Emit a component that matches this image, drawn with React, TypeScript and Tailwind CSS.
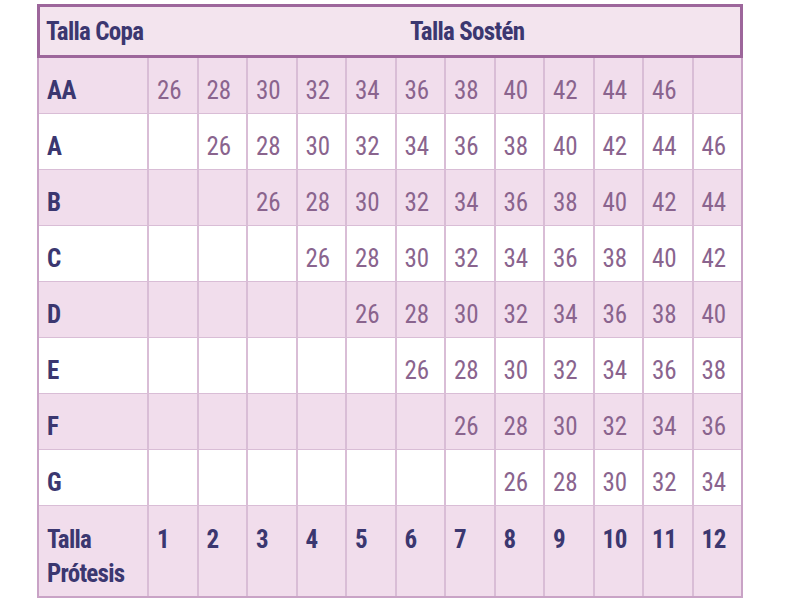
import React from "react";

const rows: { cup: string; start: number }[] = [
  { cup: "AA", start: 0 },
  { cup: "A", start: 1 },
  { cup: "B", start: 2 },
  { cup: "C", start: 3 },
  { cup: "D", start: 4 },
  { cup: "E", start: 5 },
  { cup: "F", start: 6 },
  { cup: "G", start: 7 },
];

const sizes = [26, 28, 30, 32, 34, 36, 38, 40, 42, 44, 46];

function cellValue(start: number, col: number) {
  const i = col - start;
  if (i < 0 || i >= sizes.length) return "";
  return String(sizes[i]);
}

export default function App() {
  const font = { fontFamily: "'Liberation Sans Narrow', 'Roboto Condensed', 'DejaVu Sans Condensed', Roboto, sans-serif" };
  return (
    <div className="w-[790px] h-[600px] bg-white pt-[4px] pl-[37px]" style={font}>
      <div className="w-[706px]">
        {/* header */}
        <div className="h-[54px] border-[3px] border-[#9d669b] bg-[#f3e4ee] flex items-center pt-[2px] text-[25px] font-bold tracking-[-0.7px] text-[#3b3770] whitespace-nowrap">
          <div className="w-[107px] pl-[6px]">Talla Copa</div>
          <div className="flex-1 pl-[263px]">Talla Sostén</div>
        </div>
        {/* body */}
        <div className="border-x-2 border-b-2 border-[#c9a3c6]">
          {rows.map((r, ri) => (
            <div
              key={r.cup}
              className={`grid grid-cols-[108px_repeat(12,minmax(0,1fr))] h-[56px] border-b border-[#d9bdd6] ${
                ri % 2 === 0 ? "bg-[#f1ddec]" : "bg-white"
              }`}
            >
              <div className="flex items-center pl-[8px] pt-[10px] text-[25px] font-bold tracking-[-0.5px] text-[#3b3770]">{r.cup}</div>
              {Array.from({ length: 12 }).map((_, c) => (
                <div
                  key={c}
                  className="flex items-center pl-[8px] pt-[10px] border-l-2 border-[#d9bdd6] text-[25px] text-[#8a648e]"
                >
                  {cellValue(r.start, c)}
                </div>
              ))}
            </div>
          ))}
          <div className="grid grid-cols-[108px_repeat(12,minmax(0,1fr))] h-[90px] bg-[#f1ddec]">
            <div className="pl-[8px] pt-[17px] text-[25px] leading-[34px] font-bold tracking-[-0.7px] text-[#3b3770]">
              Talla
              <br />
              Prótesis
            </div>
            {Array.from({ length: 12 }).map((_, c) => (
              <div
                key={c}
                className="pl-[8px] pt-[17px] leading-[34px] border-l-2 border-[#d9bdd6] text-[25px] font-bold tracking-[-0.5px] text-[#3b3770]"
              >
                {c + 1}
              </div>
            ))}
          </div>
        </div>
      </div>
    </div>
  );
}
